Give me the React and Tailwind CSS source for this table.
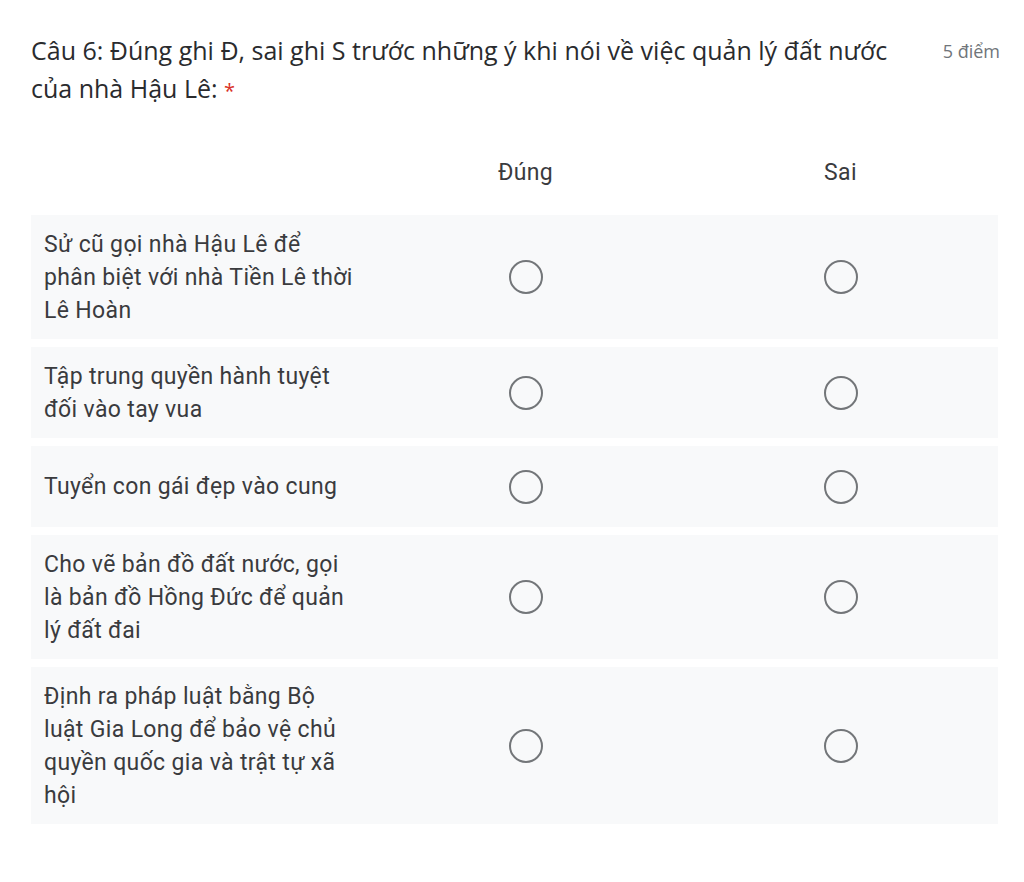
import React from "react";

const rows = [
  "Sử cũ gọi nhà Hậu Lê để phân biệt với nhà Tiền Lê thời Lê Hoàn",
  "Tập trung quyền hành tuyệt đối vào tay vua",
  "Tuyển con gái đẹp vào cung",
  "Cho vẽ bản đồ đất nước, gọi là bản đồ Hồng Đức để quản lý đất đai",
  "Định ra pháp luật bằng Bộ luật Gia Long để bảo vệ chủ quyền quốc gia và trật tự xã hội",
];

function Radio() {
  return <div className="w-[34px] h-[34px] rounded-full border-2 border-[#737679]" />;
}

export default function App() {
  return (
    <div className="min-h-screen bg-white pl-[31px] pr-[24px] pt-[31px] text-[#202124]">
      {/* Tiêu đề câu hỏi */}
      <div className="flex items-start">
        <h2 className="flex-1 h-[76px] text-[25px] leading-[38px] font-['Open_Sans',sans-serif] text-[#2a2b2e]">
          Câu 6: Đúng ghi Đ, sai ghi S trước những ý khi nói về việc quản lý đất nước của nhà Hậu Lê:{" "}
          <span className="text-[#d93025] text-[20px] leading-none">*</span>
        </h2>
        <span className="ml-[24px] mt-[4px] text-[18px] leading-[32px] text-[#70757a] font-['Open_Sans',sans-serif] whitespace-nowrap">
          5 điểm
        </span>
      </div>

      {/* Bảng lựa chọn */}
      <div className="w-[967px] font-['Roboto',sans-serif] text-[#3a3b3e]">
        <div className="mt-[49px] grid grid-cols-[337px_315px_315px] text-[23px] leading-[33px] tracking-[0.35px]">
          <div />
          <div className="text-center">Đúng</div>
          <div className="text-center">Sai</div>
        </div>

        <div className="mt-[26px] flex flex-col gap-[8px]">
          {rows.map((r) => (
            <div
              key={r}
              className="grid grid-cols-[337px_315px_315px] items-center bg-[#f8f9fa] min-h-[81px] py-[12.5px]"
            >
              <div className="pl-[13px] text-[23px] leading-[33px] tracking-[0.35px]">
                <div className="w-[310px]">{r}</div>
              </div>
              <div className="flex justify-center">
                <Radio />
              </div>
              <div className="flex justify-center">
                <Radio />
              </div>
            </div>
          ))}
        </div>
      </div>
    </div>
  );
}
